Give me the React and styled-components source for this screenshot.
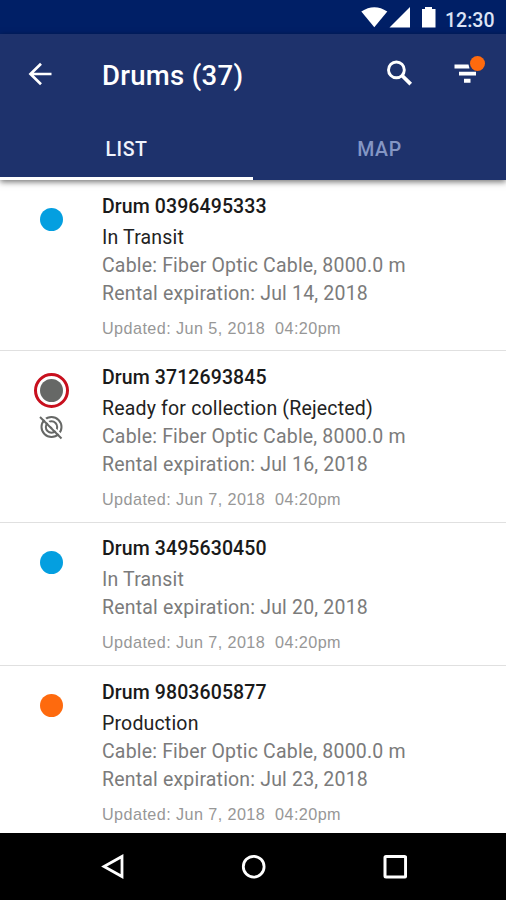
import styled, { createGlobalStyle } from "styled-components";

const COLORS = {
  STATUS: "#001f66",
  HEADER: "#1e326c",
  WHITE: "#ffffff",
  TAB_OFF: "#8496c4",
  BLUE: "#049fe0",
  ORANGE: "#fe6a0e",
  GREY: "#666866",
  RED: "#c8101e",
  TEXT: "#222222",
  TEXT_MUTED: "#7b7b7b",
  TEXT_LIGHT: "#979797",
  LINE: "#e0e0e0",
};

const DRUMS = [
  {
    id: "0396495333",
    color: COLORS.BLUE,
    status: "In Transit",
    cable: "Fiber Optic Cable, 8000.0 m",
    expiration: "Jul 14, 2018",
    updated: "Jun 5, 2018\u00a0 04:20pm",
  },
  {
    id: "3712693845",
    color: COLORS.GREY,
    rejected: true,
    status: "Ready for collection (Rejected)",
    cable: "Fiber Optic Cable, 8000.0 m",
    expiration: "Jul 16, 2018",
    updated: "Jun 7, 2018\u00a0 04:20pm",
  },
  {
    id: "3495630450",
    color: COLORS.BLUE,
    muted: true,
    status: "In Transit",
    expiration: "Jul 20, 2018",
    updated: "Jun 7, 2018\u00a0 04:20pm",
  },
  {
    id: "9803605877",
    color: COLORS.ORANGE,
    status: "Production",
    cable: "Fiber Optic Cable, 8000.0 m",
    expiration: "Jul 23, 2018",
    updated: "Jun 7, 2018\u00a0 04:20pm",
  },
];

const StatusIcons = () => (
  <svg width="75" height="34" viewBox="0 0 75 34" fill="#fff">
    <path d="M0.300 11.500Q13.300 3 26.300 11.500L13.300 27.300Z" />
    <path d="M49 7v20.500H28.500Z" />
    <path d="M64 7h7v2h3.500v18.500H61V9h3Z" />
  </svg>
);

const BackIcon = () => (
  <svg width="24" height="24" viewBox="0 0 24 24" fill="none" stroke="#fff" strokeWidth="2.7">
    <path d="M23.500 12H3M13 1.800L2.500 12L13 22.200" />
  </svg>
);

const SearchIcon = () => (
  <svg width="28" height="28" viewBox="0 0 28 28" fill="none" stroke="#fff">
    <circle cx="10.400" cy="9.900" r="7.900" strokeWidth="2.900" />
    <path d="M16 15.500L24.700 24.200" strokeWidth="3.800" />
  </svg>
);

const FilterIcon = () => (
  <svg width="26" height="22" viewBox="0 0 26 22" fill="#fff">
    <path d="M0.500 1.500h14l1 4h-15ZM5 8.700h17v3.800H5ZM10 15.800h6.500v4H10Z" />
  </svg>
);

const SignalOffIcon = () => (
  <svg width="24" height="24" viewBox="0 0 24 24" fill="none" stroke="#666866" strokeWidth="2">
    <circle cx="12.500" cy="11" r="10" />
    <circle cx="12.500" cy="11" r="5.700" />
    <circle cx="12.500" cy="11" r="1.500" fill="#666866" stroke="none" />
    <path d="M2.500 -0.500L24.500 21.500" stroke="#fff" />
    <path d="M1 1L22.500 22.500" />
  </svg>
);

const DrumRow = ({ drum }) => (
  <Row>
    <Markers>
      {drum.rejected ? (
        <Ring>
          <Dot color={drum.color} />
        </Ring>
      ) : (
        <Dot color={drum.color} />
      )}
      {drum.rejected && <SignalOffIcon />}
    </Markers>
    <Details>
      <DrumName>Drum {drum.id}</DrumName>
      <DetailText $dark={!drum.muted}>{drum.status}</DetailText>
      {drum.cable && <DetailText>Cable: {drum.cable}</DetailText>}
      <DetailText>Rental expiration: {drum.expiration}</DetailText>
      <UpdatedText>Updated: {drum.updated}</UpdatedText>
    </Details>
  </Row>
);

const App = () => (
  <Screen>
    <GlobalStyle />
    <StatusBar>
      <StatusIcons />
      <Clock>12:30</Clock>
    </StatusBar>
    <Header>
      <Toolbar>
        <IconButton $width={79} aria-label="Back">
          <BackIcon />
        </IconButton>
        <Title>Drums (37)</Title>
        <IconButton $width={68} aria-label="Search">
          <SearchIcon />
        </IconButton>
        <IconButton $width={66} aria-label="Filter">
          <FilterIcon />
          <Badge />
        </IconButton>
      </Toolbar>
      <Tabs>
        <Tab $active>LIST</Tab>
        <Tab>MAP</Tab>
      </Tabs>
    </Header>
    <List>
      {DRUMS.map((drum) => (
        <DrumRow key={drum.id} drum={drum} />
      ))}
    </List>
    <NavBar>
      <svg width="24" height="28" viewBox="0 0 24 28" fill="none" stroke="#fff" strokeWidth="2.800">
        <path d="M21 3.500V23.500L3 13.500Z" />
      </svg>
      <svg width="26" height="28" viewBox="0 0 26 28" fill="none" stroke="#fff" strokeWidth="2.800">
        <circle cx="12.700" cy="13.700" r="10.400" />
      </svg>
      <svg width="24" height="28" viewBox="0 0 24 28" fill="none" stroke="#fff" strokeWidth="3">
        <rect x="2" y="3.500" width="20.600" height="20.600" rx="1" />
      </svg>
    </NavBar>
  </Screen>
);

const GlobalStyle = createGlobalStyle`
  * {
    box-sizing: border-box;
  }
  body {
    margin: 0;
    background: ${COLORS.WHITE};
    font-family: Roboto, sans-serif;
  }
`;

const Screen = styled.div`
  display: flex;
  flex-direction: column;
  width: 506px;
  height: 900px;
  overflow: hidden;
`;

const StatusBar = styled.div`
  display: flex;
  justify-content: flex-end;
  height: 34px;
  padding-right: 11px;
  background: ${COLORS.STATUS};
`;

const Clock = styled.span`
  width: 50px;
  margin-left: 9px;
  line-height: 42px;
  font-size: 19.5px;
  font-weight: 500;
  color: #dde3f5;
  white-space: nowrap;
`;

const Header = styled.header`
  position: relative;
  height: 146px;
  flex: none;
  background: ${COLORS.HEADER};
  box-shadow: 0 2px 6px rgba(0, 0, 0, 0.55);
`;

const Toolbar = styled.div`
  display: flex;
  align-items: center;
  height: 80px;
  padding-right: 6px;
`;

const IconButton = styled.button`
  position: relative;
  display: flex;
  align-items: center;
  justify-content: center;
  width: ${(props) => props.$width}px;
  height: 56px;
  padding: 0;
  border: none;
  background: none;
`;

const Badge = styled.span`
  position: absolute;
  top: 10px;
  right: 15px;
  width: 15px;
  height: 15px;
  border-radius: 50%;
  background: ${COLORS.ORANGE};
`;

const Title = styled.h1`
  flex: 1;
  margin: 3px 0 0 23px;
  font-size: 27.5px;
  font-weight: 500;
  letter-spacing: 0.3px;
  color: ${COLORS.WHITE};
`;

const Tabs = styled.div`
  display: flex;
  height: 66px;
`;

const Tab = styled.div`
  display: flex;
  flex: 1;
  align-items: center;
  justify-content: center;
  padding-top: 7px;
  border-bottom: 3px solid ${(props) => (props.$active ? COLORS.WHITE : "transparent")};
  font-size: 19.5px;
  font-weight: 500;
  letter-spacing: 0.6px;
  color: ${(props) => (props.$active ? "#f0f3fc" : COLORS.TAB_OFF)};
`;

const List = styled.main`
  flex: 1;
  overflow: hidden;
`;

const Row = styled.section`
  display: flex;
  border-bottom: 1px solid ${COLORS.LINE};
`;

const Markers = styled.div`
  display: flex;
  flex-direction: column;
  align-items: center;
  width: 102px;
  padding-top: 28px;
`;

const Dot = styled.span`
  width: 23px;
  height: 23px;
  border-radius: 50%;
  background: ${(props) => props.color};
`;

const Ring = styled.span`
  display: flex;
  align-items: center;
  justify-content: center;
  width: 35px;
  height: 35px;
  margin: -6px 0 8px;
  border: 3px solid ${COLORS.RED};
  border-radius: 50%;
`;

const Details = styled.div`
  padding: 11.6px 0 12.8px;
`;

const DrumName = styled.h2`
  margin: 0 0 2px;
  font-size: 19.5px;
  font-weight: 500;
  line-height: 30px;
  letter-spacing: 0.1px;
  color: #1a1a1a;
`;

const DetailText = styled.p`
  margin: 0;
  font-size: 19.5px;
  line-height: 28px;
  letter-spacing: 0.18px;
  color: ${(props) => (props.$dark ? COLORS.TEXT : COLORS.TEXT_MUTED)};
`;

const UpdatedText = styled.p`
  margin: 10px 0 0;
  font-family: "Liberation Sans", Arial, sans-serif;
  font-size: 16.2px;
  line-height: 20px;
  letter-spacing: 0.42px;
  color: ${COLORS.TEXT_LIGHT};
`;

const NavBar = styled.nav`
  display: flex;
  align-items: center;
  justify-content: space-between;
  height: 67px;
  flex: none;
  padding: 0 99px 0 101px;
  background: #000;
`;

export default App;
